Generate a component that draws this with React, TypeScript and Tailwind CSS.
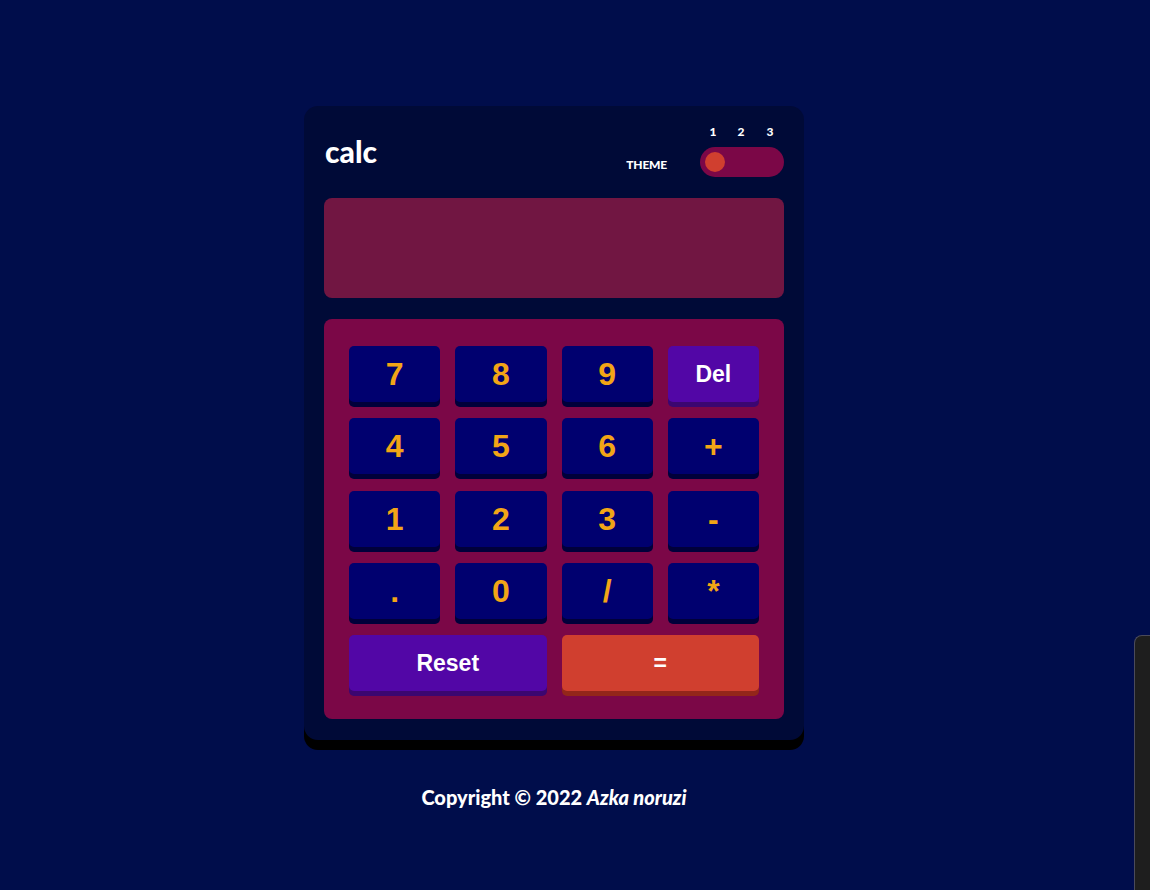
import React from "react";

const numKey =
  "h-[56px] rounded-[5px] bg-[#00006f] shadow-[0_5px_0_#00003a] flex items-center justify-center text-[32px] font-bold text-[#f2a516]";
const purpleKey =
  "h-[56px] rounded-[5px] bg-[#5206a6] shadow-[0_5px_0_#3b0670] flex items-center justify-center text-[23px] font-bold text-white";

export default function App() {
  const rows = [
    ["7", "8", "9", "Del"],
    ["4", "5", "6", "+"],
    ["1", "2", "3", "-"],
    [".", "0", "/", "*"],
  ];
  return (
    <div className="relative min-h-[890px] w-full overflow-hidden bg-[#000d4b] [font-family:'Liberation_Sans',Arial,sans-serif]">
      <div className="ml-[304px] w-[500px] pt-[106px]">
        <div className="rounded-[14px] bg-[#000a37] px-5 pt-5 pb-[21px] shadow-[0_10px_0_#000]">
          {/* header */}
          <div className="flex h-[52px] items-start justify-between">
            <div className="mt-[10px] ml-[1px] text-[30px] font-black leading-none text-white [font-family:Lato,sans-serif] tracking-[0px]">
              calc
            </div>
            <div className="flex items-end">
              <div className="mb-[3px] mr-[33px] text-[12px] font-black text-white [font-family:Lato,sans-serif] tracking-[-0.2px]">
                THEME
              </div>
              <div className="flex flex-col">
                <div className="flex h-[11px] items-center pl-[9px] text-[12px] font-black text-white [font-family:Lato,sans-serif]">
                  <span className="w-[8px] text-center">1</span>
                  <span className="ml-[20px] w-[8px] text-center">2</span>
                  <span className="ml-[21px] w-[8px] text-center">3</span>
                </div>
                <div className="mt-[10px] flex h-[30px] w-[84px] items-center rounded-full bg-[#7b0747] px-[5px]">
                  <div className="h-[20px] w-[20px] rounded-full bg-[#d03f2f]" />
                </div>
              </div>
            </div>
          </div>
          {/* display */}
          <div className="mt-[20px] h-[100px] rounded-[8px] bg-[#711642]" />
          {/* keypad */}
          <div className="mt-[21px] rounded-[8px] bg-[#7b0747] px-[25px] pt-[27px] pb-[28px]">
            <div className="grid grid-cols-4 gap-x-[15px] gap-y-[16.25px]">
              {rows.flat().map((k) => (
                <div key={k} className={k === "Del" ? purpleKey : numKey}>
                  {k}
                </div>
              ))}
              <div className={`${purpleKey} col-span-2`}>Reset</div>
              <div className="col-span-2 flex h-[56px] items-center justify-center rounded-[5px] bg-[#d03f2f] text-[23px] font-bold text-white shadow-[0_5px_0_#93261a]">
                =
              </div>
            </div>
          </div>
        </div>
        <div className="mt-[42px] text-center text-[20px] font-black text-white [font-family:Lato,sans-serif]">
          Copyright © 2022 <span className="italic">Azka noruzi</span>
        </div>
      </div>
      <div className="absolute left-[1134px] top-[635px] h-[300px] w-[40px] rounded-tl-[8px] border-l border-t border-[#4a4a5a] bg-[#1e1e1e]" />
    </div>
  );
}
